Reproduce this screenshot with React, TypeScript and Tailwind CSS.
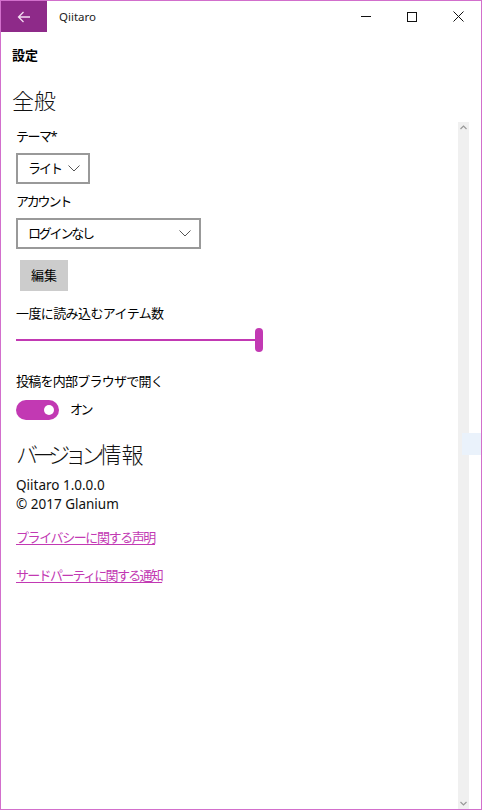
import React from "react";

const font = { fontFamily: "'Noto Sans', 'Noto Sans CJK JP', sans-serif" };

function Chevron({ className = "" }: { className?: string }) {
  return (
    <svg width="12" height="7" viewBox="0 0 12 7" className={className}>
      <path d="M0.5 0.5 L6 6 L11.5 0.5" fill="none" stroke="#555" strokeWidth="1" />
    </svg>
  );
}

export default function App() {
  return (
    <div
      className="w-[482px] h-[810px] border border-[#d26fcc] bg-white flex flex-col text-[#000] relative overflow-hidden"
      style={font}
    >
      {/* title bar */}
      <div className="h-[31px] flex items-center shrink-0">
        <div className="w-[46px] h-[31px] bg-[#8e2a89] flex items-center justify-center">
          <svg width="14" height="12" viewBox="0 0 14 12">
            <path d="M13 6 H1.5 M6.5 1 L1.5 6 L6.5 11" fill="none" stroke="#f4dcf2" strokeWidth="1.3" />
          </svg>
        </div>
        <div className="ml-[12px] text-[11.5px] text-[#222]">Qiitaro</div>
        <div className="ml-auto flex items-center h-full">
          <div className="w-[46px] h-full flex items-center justify-center">
            <div className="w-[10px] h-[1px] bg-[#111]" />
          </div>
          <div className="w-[46px] h-full flex items-center justify-center">
            <div className="w-[10px] h-[10px] border border-[#111]" />
          </div>
          <div className="w-[46px] h-full flex items-center justify-center">
            <svg width="11" height="11" viewBox="0 0 11 11">
              <path d="M0.5 0.5 L10.5 10.5 M10.5 0.5 L0.5 10.5" stroke="#111" strokeWidth="1" />
            </svg>
          </div>
        </div>
      </div>

      {/* header */}
      <div className="pl-[11px] pt-[14px] text-[13px] leading-[18px] font-bold">設定</div>
      <div className="pl-[11px] mt-[21px] text-[22px] leading-[30px] font-light text-[#111]">全般</div>

      <div className="flex flex-row flex-1 min-h-0">
        <div className="flex-1 pl-[15px] flex flex-col items-start whitespace-nowrap">
          <div className="mt-[12px] text-[13px] leading-[18px] tracking-[-1.5px]">テーマ*</div>
          <div className="mt-[8px] w-[74px] h-[31px] border-2 border-[#999] flex items-center pl-[10px] pr-[8px]">
            <span className="text-[13px] tracking-[-2px]">ライト</span>
            <Chevron className="ml-auto" />
          </div>
          <div className="mt-[8px] text-[13px] leading-[18px] tracking-[-2.2px]">アカウント</div>
          <div className="mt-[8px] w-[185px] h-[31px] border-2 border-[#999] flex items-center pl-[10px] pr-[8px]">
            <span className="text-[13px] tracking-[-2.2px]">ログインなし</span>
            <Chevron className="ml-auto" />
          </div>
          <div className="mt-[11px] ml-[4px] w-[48px] h-[31px] bg-[#cccccc] flex items-center justify-center text-[13px]">
            編集
          </div>
          <div className="mt-[13px] text-[13px] leading-[18px] tracking-[-0.6px]">一度に読み込むアイテム数</div>
          <div className="mt-[6px] w-[247px] h-[24px] relative flex items-center">
            <div className="w-[240px] h-[2px] bg-[#c239b3]" />
            <div className="w-[8px] h-[24px] rounded-full bg-[#c239b3]" />
          </div>
          <div className="mt-[20px] text-[13px] leading-[18px] tracking-[-0.75px]">投稿を内部ブラウザで開く</div>
          <div className="mt-[10px] flex items-center">
            <div className="w-[43px] h-[20px] rounded-full bg-[#c239b3] flex items-center justify-end pr-[5px]">
              <div className="w-[10px] h-[10px] rounded-full bg-white" />
            </div>
            <span className="ml-[11px] text-[13px] tracking-[-2.5px]">オン</span>
          </div>
          <div className="mt-[19px] text-[22px] leading-[30px] font-light text-[#111]">
            <span className="tracking-[-5.6px]">バージョン</span>
            <span className="ml-[2px]">情報</span>
          </div>
          <div className="mt-[7px] text-[13.5px] leading-[19px] text-[#111]">Qiitaro 1.0.0.0</div>
          <div className="text-[13.5px] leading-[19px] text-[#111]">© 2017 Glanium</div>
          <div className="mt-[14px] text-[13px] leading-[18px] text-[#c239b3] underline underline-offset-2 tracking-[-1.4px]">
            プライバシーに関する声明
          </div>
          <div className="mt-[20px] text-[13px] leading-[18px] text-[#c239b3] underline underline-offset-2 tracking-[-1.7px]">
            サードパーティに関する通知
          </div>
        </div>
        <div className="w-[11px] mr-[12px] mt-[7px] bg-[#f0f0f0] flex flex-col items-center justify-between py-[3px]">
          <svg width="7" height="5" viewBox="0 0 7 5">
            <path d="M0.5 4 L3.5 1 L6.5 4" fill="none" stroke="#999" strokeWidth="1.2" />
          </svg>
          <svg width="7" height="5" viewBox="0 0 7 5">
            <path d="M0.5 1 L3.5 4 L6.5 1" fill="none" stroke="#999" strokeWidth="1.2" />
          </svg>
        </div>
      </div>
      <div className="absolute left-[461px] top-[432px] w-[19px] h-[22px] bg-[#eaf2fb]" />
    </div>
  );
}
